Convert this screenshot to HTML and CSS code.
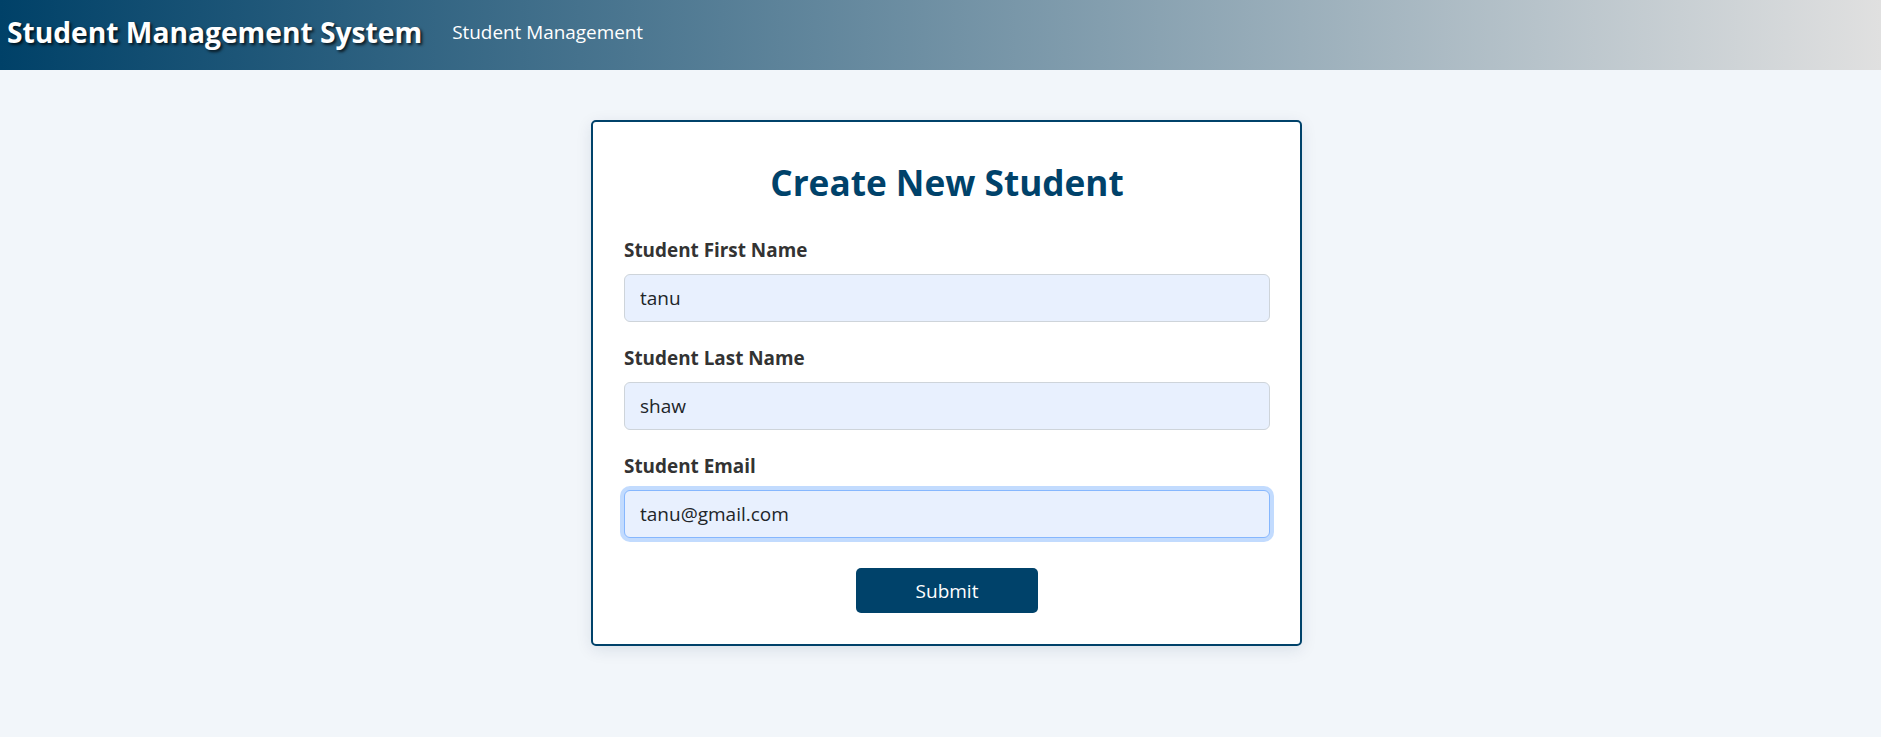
FILE: index.html
```html
<!DOCTYPE html>
<html lang="en">
<head>
<meta charset="utf-8">
<title>Student Management System</title>
<link rel="stylesheet" href="styles.css">
</head>
<body>
<header class="topbar">
  <span class="brand">Student Management System</span>
  <a class="nav-link" href="#">Student Management</a>
</header>
<main class="page">
  <section class="card">
    <h2 class="card-title">Create New Student</h2>
    <form class="form">
      <div class="field">
        <label class="field-label" for="fn">Student First Name</label>
        <input class="field-input" id="fn" type="text" value="tanu">
      </div>
      <div class="field">
        <label class="field-label" for="ln">Student Last Name</label>
        <input class="field-input" id="ln" type="text" value="shaw">
      </div>
      <div class="field">
        <label class="field-label" for="em">Student Email</label>
        <input class="field-input is-focused" id="em" type="text" value="tanu@gmail.com">
      </div>
      <div class="actions">
        <button class="btn-submit" type="button">Submit</button>
      </div>
    </form>
  </section>
</main>
</body>
</html>
```

FILE: styles.css
```css
* { box-sizing: border-box; }
html, body { margin: 0; padding: 0; }
body {
  font-family: "Open Sans", "Noto Sans", sans-serif;
  background: #f2f6fa;
  color: #212529;
  min-height: 737px;
}
.topbar {
  height: 70px;
  display: flex;
  align-items: center;
  padding: 0 0 6px 7px;
  background: linear-gradient(to right, #004168 0%, #e0e0e0 100%);
}
.brand {
  font-size: 28.2px;
  font-weight: 700;
  color: #fff;
  text-shadow: 2px 2px 3px rgba(0, 0, 0, 0.75);
}
.nav-link {
  margin-left: 30px;
  font-size: 18.9px;
  color: #fff;
  text-decoration: none;
}
.page {
  display: flex;
  justify-content: center;
  padding: 50px 0 0 12px;
}
.card {
  width: 711px;
  background: #fff;
  border: 2px solid #00426a;
  border-radius: 5px;
  padding: 35px 30px 31px 31px;
  box-shadow: 0 4px 16px rgba(0, 40, 80, 0.10);
}
.card-title {
  margin: 0 0 31px;
  text-align: center;
  font-size: 35.2px;
  line-height: 50px;
  font-weight: 700;
  color: #00426a;
}
.form {
  display: flex;
  flex-direction: column;
}
.field {
  display: flex;
  flex-direction: column;
  margin-bottom: 24px;
}
.field-label {
  font-size: 18.9px;
  font-weight: 700;
  color: #333;
  line-height: 24px;
  margin-bottom: 12px;
}
.field-input {
  height: 48px;
  width: 100%;
  padding: 0 15px;
  font-family: inherit;
  font-size: 19px;
  color: #212529;
  background: #e8f0fe;
  border: 1px solid #ced4da;
  border-radius: 6px;
  outline: none;
}
.field-input.is-focused {
  border-color: #86b7fe;
  box-shadow: 0 0 0 4px rgba(13, 110, 253, 0.25);
}
.actions {
  display: flex;
  justify-content: center;
  padding-top: 6px;
}
.btn-submit {
  width: 182px;
  height: 45px;
  border: none;
  border-radius: 5px;
  background: #00426a;
  color: #fff;
  font-family: inherit;
  font-size: 19px;
}
```
